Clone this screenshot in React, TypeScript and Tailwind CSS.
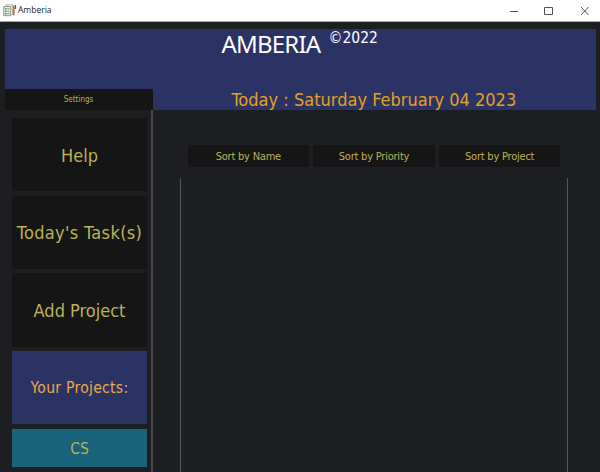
import React from "react";

const sideButton = "flex w-[135px] shrink-0 items-center justify-center whitespace-nowrap pt-[2px]";
const sortButton = "flex h-[22px] items-center justify-center bg-[#151515] text-[11px] tracking-[-0.22px] text-[#bcb255] whitespace-nowrap";

function AppIcon() {
  return (
    <svg width="14" height="13" viewBox="0 0 14 13" fill="none">
      <path d="M3 .8h6.5v10H3z" fill="#f4f4ee" stroke="#b0b3ac" />
      <path d="M.7 2.5h7v9.2h-7z" fill="#e5e9e0" stroke="#969c93" />
      <path d="M2 4.8h1.6M2 7.2h1.6M2 9.7h1.6" stroke="#5b8f5e" strokeWidth="1.4" />
      <path d="M4.5 4.8h2M4.5 7.2h2M4.5 9.7h2" stroke="#8c908b" />
      <path d="M10.9 1.5v7.8" stroke="#b66d3a" strokeWidth="1.6" />
      <path d="M10.9 9v2.5M12.6 1v4" stroke="#55504c" />
    </svg>
  );
}

export default function App() {
  return (
    <div className="flex h-[472px] w-[600px] flex-col overflow-hidden bg-[#1d1e21] font-['DejaVu_Sans_Condensed','DejaVu_Sans',sans-serif] leading-none [font-stretch:condensed]">
      <header className="flex h-[22px] shrink-0 items-center justify-between border-b border-[#a5a7a8] bg-white pl-[3px] pr-[11px] text-[#222]">
        <div className="flex items-center gap-[1px]">
          <AppIcon />
          <span className="font-['Open_Sans',sans-serif] text-[8.5px] [font-stretch:normal]">Amberia</span>
        </div>
        <svg width="80" height="12" viewBox="0 0 80 12" fill="none" stroke="#555" strokeWidth="1">
          <path d="M1 6.5h8M35.5 2.5h8v7h-8zM72 2l7.5 8M79.5 2l-7.5 8" />
        </svg>
      </header>
      <section className="mx-[4.5px] mt-[7px] flex h-[81px] shrink-0 bg-[#2b3365]">
        <div className="flex w-[148px] flex-col justify-end">
          <button className="h-[21px] bg-[#151515] text-[8px] text-[#bcb255]">Settings</button>
        </div>
        <div className="flex flex-1 flex-col justify-between">
          <div className="flex items-start pl-[69px] pt-[3px] text-white">
            <h1 className="w-[99px] font-['Noto_Sans',sans-serif] text-[24px] tracking-[-0.8px]">AMBERIA</h1>
            <span className="ml-[8px] text-[15.5px] leading-[13px]">©2022</span>
          </div>
          <p className="whitespace-nowrap pb-[1px] pl-[79px] text-[18px] tracking-[0.02px] text-[#e3a021]">Today : Saturday February 04 2023</p>
        </div>
      </section>
      <main className="flex min-h-0 flex-1">
        <nav className="flex w-[153px] shrink-0 flex-col gap-[4.5px] border-r-2 border-[#48494d] pl-[12px] pt-[8px] text-[18px] text-[#bcb255]">
          <button className={`${sideButton} h-[73.2px] bg-[#151515]`}>Help</button>
          <button className={`${sideButton} h-[73.2px] bg-[#151515] tracking-[0.35px]`}>Today's Task(s)</button>
          <button className={`${sideButton} h-[73.2px] bg-[#151515]`}>Add Project</button>
          <div className={`${sideButton} h-[73.2px] bg-[#2b3365] text-[15.5px] tracking-[0.3px] text-[#eba944]`}>Your Projects:</div>
          <button className={`${sideButton} h-[38px] bg-[#18647a] pt-[3px] text-[15.5px]`}>CS</button>
        </nav>
        <section className="flex flex-1 flex-col pt-[35px]">
          <div className="ml-[34.5px] grid w-[373px] shrink-0 grid-cols-3 gap-[4px]">
            <button className={sortButton}>Sort by Name</button>
            <button className={sortButton}>Sort by Priority</button>
            <button className={sortButton}>Sort by Project</button>
          </div>
          <div className="ml-[27px] mt-[11px] w-[388px] flex-1 border-x border-[#56575d]" />
        </section>
      </main>
    </div>
  );
}
